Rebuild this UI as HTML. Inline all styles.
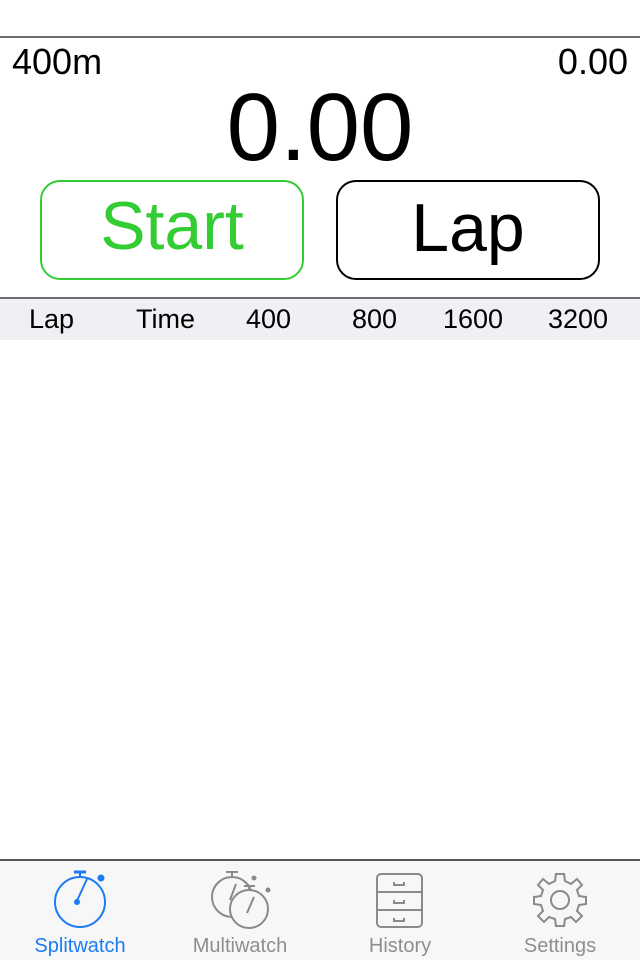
<!DOCTYPE html>
<html><head><meta charset="utf-8"><style>
html,body{margin:0;padding:0;width:640px;height:960px;background:#fff;overflow:hidden;font-family:"Liberation Sans",sans-serif;}
.t{position:absolute;white-space:nowrap;line-height:1;}
.btn{position:absolute;box-sizing:border-box;border-radius:20px;border:2px solid;top:180px;height:100px;width:264px;}
</style></head><body>
<div style="position:absolute;left:0;top:36px;width:640px;height:2px;background:#6e6e6e"></div>
<div class="t" style="left:12px;top:44px;font-size:36px;">400m</div>
<div class="t" style="right:12px;top:44px;font-size:36px;">0.00</div>
<div class="t" style="left:0;width:640px;text-align:center;top:80px;font-size:96px;">0.00</div>
<div class="btn" style="left:40px;border-color:#33cc33;width:264px;"></div>
<div class="t" style="left:40px;width:264px;text-align:center;top:192px;font-size:68px;color:#33cc33;">Start</div>
<div class="btn" style="left:336px;border-color:#000;"></div>
<div class="t" style="left:336px;width:264px;text-align:center;top:194px;font-size:68px;">Lap</div>
<div style="position:absolute;left:0;top:297px;width:640px;height:2px;background:#6e6e6e"></div>
<div style="position:absolute;left:0;top:299px;width:640px;height:41px;background:#efeff4"></div>
<div class="t" style="left:29px;top:306px;font-size:27px;">Lap</div>
<div class="t" style="left:136px;top:306px;font-size:27px;">Time</div>
<div class="t" style="left:246px;top:306px;font-size:27px;">400</div>
<div class="t" style="left:352px;top:306px;font-size:27px;">800</div>
<div class="t" style="left:443px;top:306px;font-size:27px;">1600</div>
<div class="t" style="left:548px;top:306px;font-size:27px;">3200</div>
<div style="position:absolute;left:0;top:859px;width:640px;height:2px;background:#555"></div>
<div style="position:absolute;left:0;top:861px;width:640px;height:99px;background:#f7f7f7"></div>
<svg style="position:absolute;left:0;top:855px" width="640" height="80" viewBox="0 0 640 80" fill="none" stroke-width="2">
<g stroke="#1a7cf5">
<ellipse cx="80" cy="47" rx="25" ry="25"/>
<line x1="80" y1="22" x2="80" y2="17"/><line x1="74" y1="17" x2="86" y2="17" stroke-width="3"/>
<line x1="76" y1="48" x2="87" y2="24"/><circle cx="77" cy="47" r="2" fill="#1a7cf5"/>
<circle cx="101" cy="23" r="2.5" fill="#1a7cf5"/>
</g>
<g stroke="#8a8a8a">
<circle cx="232" cy="42" r="20"/>
<circle cx="249" cy="54" r="19" fill="#f7f7f7"/>
<line x1="232" y1="22" x2="232" y2="17"/><line x1="226" y1="17" x2="238" y2="17"/>
<line x1="249" y1="35" x2="249" y2="31"/><line x1="244" y1="31" x2="255" y2="31"/>
<line x1="230" y1="45" x2="236" y2="29"/><line x1="247" y1="58" x2="254" y2="42"/>
<circle cx="254" cy="23" r="1.5" fill="#8a8a8a"/><circle cx="268" cy="35" r="1.5" fill="#8a8a8a"/>
</g>
<g stroke="#8a8a8a">
<rect x="377" y="19" width="45" height="53" rx="4"/>
<line x1="377" y1="37" x2="422" y2="37"/><line x1="377" y1="55" x2="422" y2="55"/>
<path d="M394 27v3h10v-3M394 45v3h10v-3M394 63v3h10v-3"/>
</g>
<g stroke="#8a8a8a" transform="translate(560,45)">
<circle r="9"/>
<path d="M-4,-26 L4,-26 L5,-19 L11,-16 L17,-21 L22,-15 L17,-10 L19,-4 L26,-3 L26,4 L19,5 L17,11 L22,16 L16,22 L11,17 L5,19 L4,26 L-4,26 L-5,19 L-11,17 L-16,22 L-22,16 L-17,11 L-19,5 L-26,4 L-26,-3 L-19,-4 L-17,-10 L-22,-15 L-17,-21 L-11,-16 L-5,-19 Z"/>
</g>
</svg>
<div class="t" style="left:0;width:160px;text-align:center;top:936px;font-size:20px;color:#1a7cf5;">Splitwatch</div>
<div class="t" style="left:160px;width:160px;text-align:center;top:936px;font-size:20px;color:#8e8e8e;">Multiwatch</div>
<div class="t" style="left:320px;width:160px;text-align:center;top:936px;font-size:20px;color:#8e8e8e;">History</div>
<div class="t" style="left:480px;width:160px;text-align:center;top:936px;font-size:20px;color:#8e8e8e;">Settings</div>
</body></html>
